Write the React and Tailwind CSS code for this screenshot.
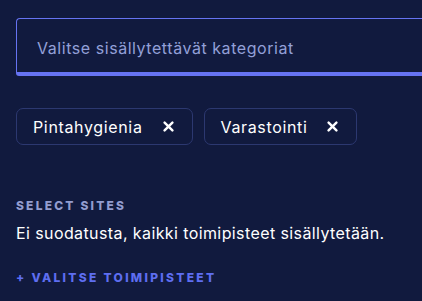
import React from "react";

function XIcon() {
  return (
    <svg width="11" height="11" viewBox="0 0 11 11" className="shrink-0">
      <path d="M1.6 1.6 L9.4 9.4 M9.4 1.6 L1.6 9.4" stroke="#ffffff" strokeWidth="2.4" strokeLinecap="round" />
    </svg>
  );
}

function Chip({ label }) {
  return (
    <div className="flex h-[37px] items-center gap-[20px] rounded-[7px] border border-[#2c3870] pl-[16px] pr-[18px] text-[16px] tracking-[0.65px] text-white">
      <span>{label}</span>
      <XIcon />
    </div>
  );
}

export default function App() {
  return (
    <div className="h-[301px] w-[422px] overflow-hidden bg-[#111a3e] pl-4 pt-[18px] font-['Inter',sans-serif]">
      <div className="-mr-4 flex h-[58px] items-center rounded-t-[4px] rounded-b-[3px] border border-b-4 border-[#6673f2] border-r-0 pl-[20px] pt-[4px] text-[16px] tracking-[0.55px] text-[#93a0d8]">
        Valitse sisällytettävät kategoriat
      </div>
      <div className="mt-[32px] flex gap-[11px]">
        <Chip label="Pintahygienia" />
        <Chip label="Varastointi" />
      </div>
      <div className="mt-[52px] text-[12px] font-extrabold tracking-[2.2px] text-[#939dd0]">SELECT SITES</div>
      <div className="mt-[6px] text-[16px] tracking-[0.4px] text-white">Ei suodatusta, kaikki toimipisteet sisällytetään.</div>
      <div className="mt-[24px] text-[12px] font-extrabold tracking-[2.3px] text-[#5e6ef0]">+ VALITSE TOIMIPISTEET</div>
    </div>
  );
}
